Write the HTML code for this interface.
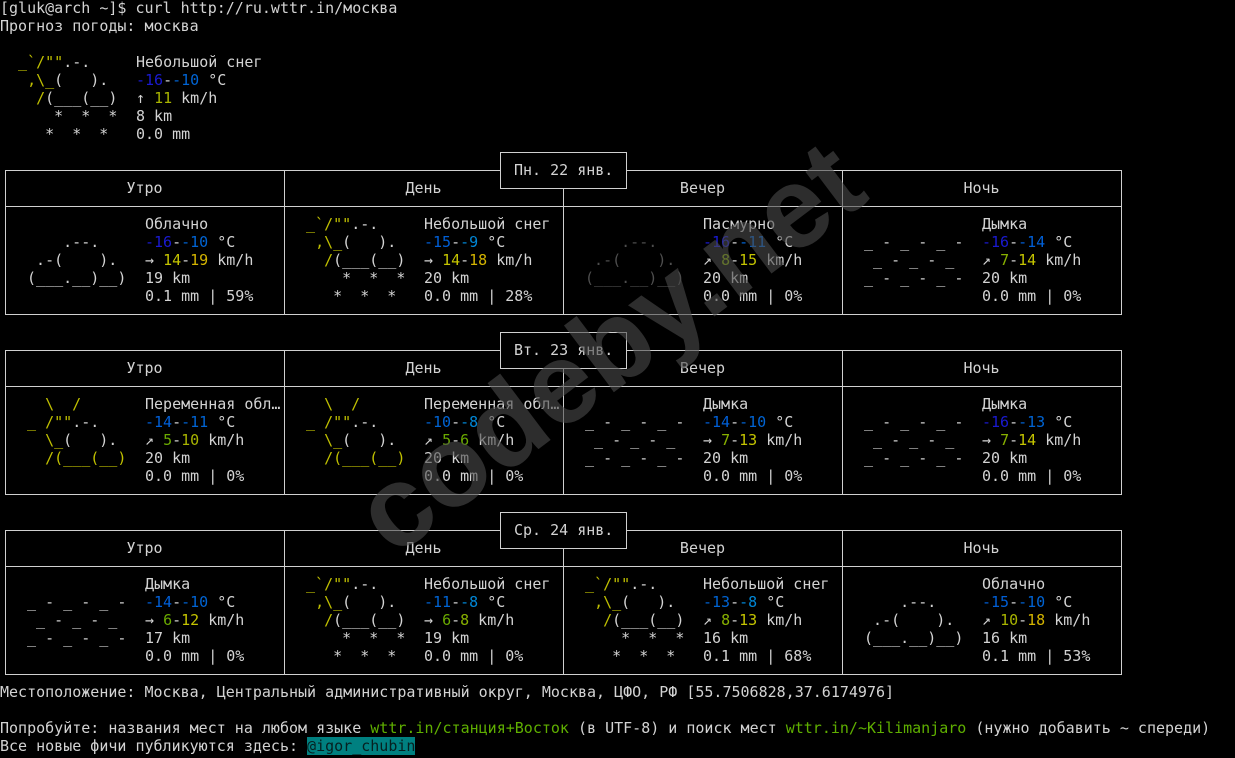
<!DOCTYPE html>
<html><head><meta charset="utf-8">
<style>
html,body{margin:0;padding:0;background:#000;width:1235px;height:758px;overflow:hidden;position:relative}
pre,.h{font-family:"DejaVu Sans Mono","Liberation Mono","Noto Sans CJK SC",monospace;font-size:15px;line-height:18px;color:#d3d3d3;margin:0;position:absolute;white-space:pre}
.y{color:#c0c000}.d{color:#4e4e4e}
.a16{color:#1a1ad2}.a15{color:#005fd7}.a13{color:#0064d4}.a9{color:#0087d7}
.w5{color:#6aaa00}.w7{color:#87b000}.w10{color:#a8b400}.w12{color:#c4c400}.w18{color:#d4b400}
.gr{color:#5faf00}
.tl{background:#008080;color:#062020}
.hl{position:absolute;height:1px;background:#d0d0d0;left:5px;width:1117px}
.vl{position:absolute;width:1px;background:#d0d0d0}
.db{position:absolute;left:500px;width:125px;height:35px;border:1px solid #d0d0d0;background:#000}
.h{width:279px;text-align:center}
.wm{position:absolute;left:310px;top:290px;font-family:"Liberation Sans",sans-serif;font-weight:bold;font-size:115px;color:rgba(75,75,75,0.6);transform:rotate(-37deg);transform-origin:center;white-space:nowrap;line-height:1;z-index:5}
</style></head><body>
<pre style="left:0;top:-1px">[gluk@arch ~]$ curl http://ru.wttr.in/москва
Прогноз погоды: москва</pre>
<pre style="left:9px;top:53px"> <span class="y">_`/""</span>.-.
  <span class="y">,\_</span>(   ).
   <span class="y">/</span>(___(__)
     *  *  *
    *  *  *</pre>
<pre style="left:136px;top:53px">Небольшой снег
<span class="a16">-16</span>-<span class="a13">-10</span> °C
↑ <span class="w10">11</span> km/h
8 km
0.0 mm</pre>

<div class="hl" style="top:170px"></div><div class="hl" style="top:206px"></div><div class="hl" style="top:314px"></div>
<div class="hl" style="top:350px"></div><div class="hl" style="top:386px"></div><div class="hl" style="top:494px"></div>
<div class="hl" style="top:530px"></div><div class="hl" style="top:566px"></div><div class="hl" style="top:674px"></div>
<div class="vl" style="left:5px;top:170px;height:145px"></div><div class="vl" style="left:284px;top:170px;height:145px"></div><div class="vl" style="left:563px;top:170px;height:145px"></div><div class="vl" style="left:842px;top:170px;height:145px"></div><div class="vl" style="left:1121px;top:170px;height:145px"></div>
<div class="vl" style="left:5px;top:350px;height:145px"></div><div class="vl" style="left:284px;top:350px;height:145px"></div><div class="vl" style="left:563px;top:350px;height:145px"></div><div class="vl" style="left:842px;top:350px;height:145px"></div><div class="vl" style="left:1121px;top:350px;height:145px"></div>
<div class="vl" style="left:5px;top:530px;height:145px"></div><div class="vl" style="left:284px;top:530px;height:145px"></div><div class="vl" style="left:563px;top:530px;height:145px"></div><div class="vl" style="left:842px;top:530px;height:145px"></div><div class="vl" style="left:1121px;top:530px;height:145px"></div>
<div class="db" style="top:152px"></div><div class="db" style="top:332px"></div><div class="db" style="top:512px"></div>
<pre style="left:514px;top:161px">Пн. 22 янв.</pre>
<pre style="left:514px;top:341px">Вт. 23 янв.</pre>
<pre style="left:514px;top:521px">Ср. 24 янв.</pre>

<div class="h" style="left:5px;top:179px">Утро</div><div class="h" style="left:284px;top:179px">День</div><div class="h" style="left:563px;top:179px">Вечер</div><div class="h" style="left:842px;top:179px">Ночь</div>
<div class="h" style="left:5px;top:359px">Утро</div><div class="h" style="left:284px;top:359px">День</div><div class="h" style="left:563px;top:359px">Вечер</div><div class="h" style="left:842px;top:359px">Ночь</div>
<div class="h" style="left:5px;top:539px">Утро</div><div class="h" style="left:284px;top:539px">День</div><div class="h" style="left:563px;top:539px">Вечер</div><div class="h" style="left:842px;top:539px">Ночь</div>

<pre style="left:18px;top:215px">

     .--.
  .-(    ).
 (___.__)__)</pre>
<pre style="left:145px;top:215px">Облачно
<span class="a16">-16</span>-<span class="a13">-10</span> °C
→ <span class="w12">14</span>-<span class="w18">19</span> km/h
19 km
0.1 mm | 59%</pre>
<pre style="left:297px;top:215px"> <span class="y">_`/""</span>.-.
  <span class="y">,\_</span>(   ).
   <span class="y">/</span>(___(__)
     *  *  *
    *  *  *</pre>
<pre style="left:424px;top:215px">Небольшой снег
<span class="a15">-15</span>-<span class="a9">-9</span> °C
→ <span class="w12">14</span>-<span class="w18">18</span> km/h
20 km
0.0 mm | 28%</pre>
<pre class="d" style="left:576px;top:215px">

     .--.
  .-(    ).
 (___.__)__)</pre>
<pre style="left:703px;top:215px">Пасмурно
<span class="a16">-16</span>-<span class="a13">-11</span> °C
↗ <span class="w7">8</span>-<span class="w12">15</span> km/h
20 km
0.0 mm | 0%</pre>
<pre style="left:855px;top:215px">

 _ - _ - _ -
  _ - _ - _
 _ - _ - _ -</pre>
<pre style="left:982px;top:215px">Дымка
<span class="a16">-16</span>-<span class="a15">-14</span> °C
↗ <span class="w7">7</span>-<span class="w12">14</span> km/h
20 km
0.0 mm | 0%</pre>

<pre class="y" style="left:18px;top:395px">   \  /
 _ /""<span style="color:#d3d3d3">.-.</span>
   \_<span style="color:#d3d3d3">(   ).</span>
   /(___(__)</pre>
<pre style="left:145px;top:395px">Переменная обл…
<span class="a15">-14</span>-<span class="a13">-11</span> °C
↗ <span class="w5">5</span>-<span class="w10">10</span> km/h
20 km
0.0 mm | 0%</pre>
<pre class="y" style="left:297px;top:395px">   \  /
 _ /""<span style="color:#d3d3d3">.-.</span>
   \_<span style="color:#d3d3d3">(   ).</span>
   /(___(__)</pre>
<pre style="left:424px;top:395px">Переменная обл…
<span class="a13">-10</span>-<span class="a9">-8</span> °C
↗ <span class="w5">5</span>-<span class="w5">6</span> km/h
20 km
0.0 mm | 0%</pre>
<pre style="left:576px;top:395px">

 _ - _ - _ -
  _ - _ - _
 _ - _ - _ -</pre>
<pre style="left:703px;top:395px">Дымка
<span class="a15">-14</span>-<span class="a13">-10</span> °C
→ <span class="w7">7</span>-<span class="w12">13</span> km/h
20 km
0.0 mm | 0%</pre>
<pre style="left:855px;top:395px">

 _ - _ - _ -
  _ - _ - _
 _ - _ - _ -</pre>
<pre style="left:982px;top:395px">Дымка
<span class="a16">-16</span>-<span class="a13">-13</span> °C
→ <span class="w7">7</span>-<span class="w12">14</span> km/h
20 km
0.0 mm | 0%</pre>

<pre style="left:18px;top:575px">

 _ - _ - _ -
  _ - _ - _
 _ - _ - _ -</pre>
<pre style="left:145px;top:575px">Дымка
<span class="a15">-14</span>-<span class="a13">-10</span> °C
→ <span class="w5">6</span>-<span class="w12">12</span> km/h
17 km
0.0 mm | 0%</pre>
<pre style="left:297px;top:575px"> <span class="y">_`/""</span>.-.
  <span class="y">,\_</span>(   ).
   <span class="y">/</span>(___(__)
     *  *  *
    *  *  *</pre>
<pre style="left:424px;top:575px">Небольшой снег
<span class="a13">-11</span>-<span class="a9">-8</span> °C
→ <span class="w5">6</span>-<span class="w7">8</span> km/h
19 km
0.0 mm | 0%</pre>
<pre style="left:576px;top:575px"> <span class="y">_`/""</span>.-.
  <span class="y">,\_</span>(   ).
   <span class="y">/</span>(___(__)
     *  *  *
    *  *  *</pre>
<pre style="left:703px;top:575px">Небольшой снег
<span class="a13">-13</span>-<span class="a9">-8</span> °C
↗ <span class="w7">8</span>-<span class="w12">13</span> km/h
16 km
0.1 mm | 68%</pre>
<pre style="left:855px;top:575px">

     .--.
  .-(    ).
 (___.__)__)</pre>
<pre style="left:982px;top:575px">Облачно
<span class="a15">-15</span>-<span class="a13">-10</span> °C
↗ <span class="w10">10</span>-<span class="w18">18</span> km/h
16 km
0.1 mm | 53%</pre>

<pre style="left:0;top:683px">Местоположение: Москва, Центральный административный округ, Москва, ЦФО, РФ [55.7506828,37.6174976]

Попробуйте: названия мест на любом языке <span class="gr">wttr.in/станция+Восток</span> (в UTF-8) и поиск мест <span class="gr">wttr.in/~Kilimanjaro</span> (нужно добавить ~ спереди)
Все новые фичи публикуются здесь: <span class="tl">@igor_chubin</span></pre>

<div class="wm">codeby.net</div>
</body></html>
